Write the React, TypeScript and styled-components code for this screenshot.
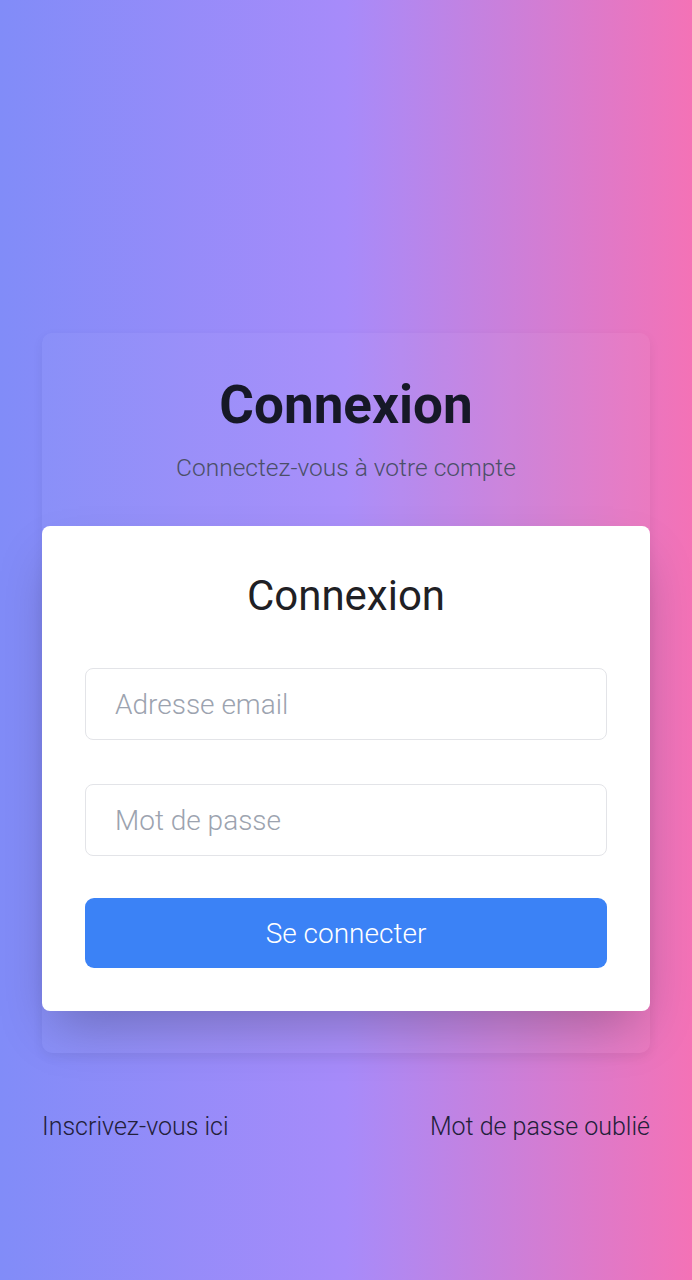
import React from "react";
import styled, { createGlobalStyle } from "styled-components";

const Global = createGlobalStyle`
  html, body { margin: 0; padding: 0; }
  body { font-family: Roboto, "Noto Sans", Arial, sans-serif; }
  * { box-sizing: border-box; }
`;

const Page = styled.div`
  min-height: 1280px;
  background: linear-gradient(90deg, #818cf8 0%, #a78bfa 50%, #f472b6 100%);
  padding: 333px 42px 0;
  display: flex;
  flex-direction: column;
`;

const Shell = styled.div`
  background: rgba(255, 255, 255, 0.04);
  border-radius: 10px;
  box-shadow: 0 4px 12px rgba(0, 0, 0, 0.06);
  padding: 40px 0 42px;
  display: flex;
  flex-direction: column;
  align-items: center;
`;

const Title = styled.h1`
  margin: 0;
  font-size: 53px;
  line-height: 64px;
  font-weight: 700;
  color: #161827;
`;

const Subtitle = styled.p`
  margin: 17px 0 0;
  font-size: 24.5px;
  line-height: 28px;
  font-weight: 300;
  color: #4b4f68;
`;

const Card = styled.div`
  margin-top: 44px;
  align-self: stretch;
  background: #fff;
  border-radius: 8px;
  box-shadow: 0 25px 50px -12px rgba(0, 0, 0, 0.25);
  padding: 44px 43px 43px;
  display: flex;
  flex-direction: column;
`;

const CardTitle = styled.h2`
  margin: 0 0 46px;
  text-align: center;
  font-size: 42px;
  line-height: 52px;
  font-weight: 400;
  color: #1f2024;
`;

const Input = styled.input<{ $mb?: number }>`
  height: 72px;
  width: 100%;
  border: 1px solid #e3e4e8;
  border-radius: 8px;
  padding: 0 29px;
  font-family: Roboto, sans-serif;
  font-size: 28px;
  font-weight: 300;
  color: #1f2937;
  background: #fff;
  outline: none;
  margin-bottom: ${(p) => p.$mb ?? 44}px;
  &::placeholder { color: #9ca3af; }
`;

const Button = styled.button`
  height: 70px;
  width: 100%;
  border: none;
  border-radius: 9px;
  background: #3b82f6;
  color: #fff;
  font-family: Roboto, sans-serif;
  font-size: 28px;
  font-weight: 300;
`;

const Links = styled.div`
  margin-top: 60px;
  display: flex;
  justify-content: space-between;
`;

const LinkText = styled.a`
  font-size: 25px;
  line-height: 28px;
  font-weight: 300;
  color: #22203a;
  text-decoration: none;
`;

export default function App() {
  return (
    <>
      <Global />
      <Page>
        <Shell>
          <Title>Connexion</Title>
          <Subtitle>Connectez-vous à votre compte</Subtitle>
          <Card>
            <CardTitle>Connexion</CardTitle>
            <Input type="email" placeholder="Adresse email" />
            <Input type="password" placeholder="Mot de passe" $mb={42} />
            <Button>Se connecter</Button>
          </Card>
        </Shell>
        <Links>
          <LinkText>Inscrivez-vous ici</LinkText>
          <LinkText>Mot de passe oublié</LinkText>
        </Links>
      </Page>
    </>
  );
}
